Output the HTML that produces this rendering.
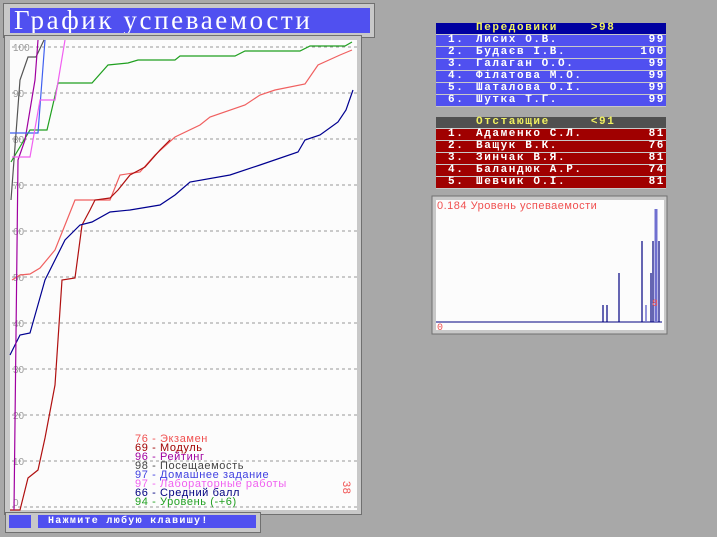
<!DOCTYPE html>
<html><head><meta charset="utf-8"><style>
body{margin:0;width:717px;height:537px;background:#a8a8a8;overflow:hidden;position:relative;font-family:"Liberation Mono","DejaVu Sans Mono",monospace}
.a{position:absolute}
.row{position:relative;height:11px;line-height:11px;font-size:11px;font-weight:bold;color:#fff;white-space:pre;border-bottom:1px solid #c8c8c8;letter-spacing:1.6px}
.row .n{position:absolute;left:12px}.row .m{position:absolute;left:40px}.row .s{position:absolute;right:1px}
.hd{height:11px;line-height:11px;font-size:11px;font-weight:bold;color:#f0f060;white-space:pre;letter-spacing:1.6px;padding-left:40px;border-bottom:1px solid #c8c8c8}
</style></head><body>
<div class="a" style="left:3px;top:3px;width:370px;height:33px;background:#c8c8c8;border:1px solid #707070"></div>
<div class="a" style="left:10px;top:8px;width:360px;height:25px;background:#5050f0;color:#fff;font-family:'Liberation Serif',serif;font-size:27px;line-height:25px;padding-left:4px;letter-spacing:2.6px;overflow:hidden;white-space:nowrap;box-sizing:border-box">График успеваемости</div>
<div class="a" style="left:4px;top:35px;width:356px;height:478px;background:#c8c8c8;border:1px solid #707070"></div>
<svg class="a" style="left:0;top:0" width="717" height="537">
<rect x="10" y="40" width="347" height="470" fill="#fcfcfc"/>
<g stroke="#999" stroke-dasharray="3,3" stroke-width="1">
<line x1="12" x2="357" y1="47" y2="47"/><line x1="12" x2="357" y1="93" y2="93"/><line x1="12" x2="357" y1="139" y2="139"/><line x1="12" x2="357" y1="185" y2="185"/><line x1="12" x2="357" y1="231" y2="231"/><line x1="12" x2="357" y1="277" y2="277"/><line x1="12" x2="357" y1="323" y2="323"/><line x1="12" x2="357" y1="369" y2="369"/><line x1="12" x2="357" y1="415" y2="415"/><line x1="12" x2="357" y1="461" y2="461"/><line x1="12" x2="357" y1="507" y2="507"/></g>
<g font-size="10" fill="#999" font-family="Liberation Sans,sans-serif">
<text x="13" y="51">100</text><text x="13" y="97">90</text><text x="13" y="143">80</text><text x="13" y="189">70</text><text x="13" y="235">60</text><text x="13" y="281">50</text><text x="13" y="327">40</text><text x="13" y="373">30</text><text x="13" y="419">20</text><text x="13" y="465">10</text><text x="13" y="506">0</text></g>
<g fill="none" stroke-width="1.2">
<polyline stroke="#20a020" points="11,162 30,130 47,130 58,83 92,83 108,65 128,63 138,60 175,60 180,56 235,56 245,51 300,51 310,46 345,46 352,42"/>
<polyline stroke="#f06060" points="12,280 20,275 30,274 40,268 55,250 65,225 75,200 110,200 120,175 140,172 155,155 175,137 200,125 210,117 245,105 260,95 275,90 305,84 318,65 340,55 352,50"/>
<polyline stroke="#b01010" points="10,510 20,510 28,478 38,470 45,438 55,385 62,280 75,278 82,225 90,210 95,200 110,198 118,190 130,175 145,167 160,150 170,140"/>
<polyline stroke="#000090" points="10,355 20,335 30,333 45,280 65,240 80,225 92,222 110,212 130,210 160,205 175,195 190,182 230,175 260,165 298,152 305,140 320,135 338,122 346,110 353,90"/>
<polyline stroke="#555" points="11,200 20,80 28,57 36,57 44,40"/>
<polyline stroke="#a000a0" points="14,510 18,160 25,140 35,80 38,40"/>
<polyline stroke="#4060f0" points="10,133 38,133 45,40"/>
<polyline stroke="#f060f0" points="12,157 30,157 40,100 55,100 58,82 65,40"/>
</g>
<g font-size="11" font-family="Liberation Sans,sans-serif" letter-spacing="0.6">
<text x="135" y="442" fill="#f05050">76 - Экзамен</text>
<text x="135" y="451" fill="#a00000">69 - Модуль</text>
<text x="135" y="460" fill="#a000a0">96 - Рейтинг</text>
<text x="135" y="469" fill="#444">98 - Посещаемость</text>
<text x="135" y="478" fill="#4040e0">97 - Домашнее задание</text>
<text x="135" y="487" fill="#f060f0">97 - Лабораторные работы</text>
<text x="135" y="496" fill="#000080">66 - Средний балл</text>
<text x="135" y="505" fill="#20a020">94 - Уровень (-+6)</text>
<text x="0" y="0" fill="#f05050" transform="translate(343,481) rotate(90)">38</text></g>
<rect x="432" y="196" width="235" height="138" fill="#c8c8c8" stroke="#707070"/>
<rect x="436" y="200" width="228" height="130" fill="#fcfcfc"/>
<line x1="436" x2="662" y1="322" y2="322" stroke="#000080"/>
<g stroke="#000080" stroke-width="1.2"><line x1="603" x2="603" y1="305" y2="322"/><line x1="607" x2="607" y1="305" y2="322"/><line x1="619" x2="619" y1="273" y2="322"/><line x1="642" x2="642" y1="241" y2="322"/><line x1="651" x2="651" y1="273" y2="322"/><line x1="653" x2="653" y1="241" y2="322"/><line x1="659" x2="659" y1="241" y2="322"/></g>
<line x1="646" x2="646" y1="305" y2="322" stroke="#7070d0" stroke-width="1.5"/>
<rect x="654.5" y="209" width="3" height="113" fill="#7070d0"/>
<text x="652" y="306" font-size="10" fill="#f05050">8</text>
<text x="437" y="209" font-size="11" fill="#f05050" font-family="Liberation Sans,sans-serif" letter-spacing="0.5">0.184    Уровень успеваемости</text>
<text x="437" y="330" font-size="10" fill="#f05050">0</text>
</svg>
<div class="a" style="left:436px;top:23px;width:230px;">
<div class="hd" style="background:#0000a0">Передовики    &gt;98</div>
<div style="background:#5050f0">
<div class="row"><span class="n">1.</span><span class="m">Лисих О.В.</span><span class="s">99</span></div>
<div class="row"><span class="n">2.</span><span class="m">Будаєв І.В.</span><span class="s">100</span></div>
<div class="row"><span class="n">3.</span><span class="m">Галаган О.О.</span><span class="s">99</span></div>
<div class="row"><span class="n">4.</span><span class="m">Філатова М.О.</span><span class="s">99</span></div>
<div class="row"><span class="n">5.</span><span class="m">Шаталова О.І.</span><span class="s">99</span></div>
<div class="row"><span class="n">6.</span><span class="m">Шутка Т.Г.</span><span class="s">99</span></div></div>
<div style="height:10px"></div>
<div class="hd" style="background:#505050">Отстающие     &lt;91</div>
<div style="background:#a00000">
<div class="row"><span class="n">1.</span><span class="m">Адаменко С.Л.</span><span class="s">81</span></div>
<div class="row"><span class="n">2.</span><span class="m">Ващук В.К.</span><span class="s">76</span></div>
<div class="row"><span class="n">3.</span><span class="m">Зинчак В.Я.</span><span class="s">81</span></div>
<div class="row"><span class="n">4.</span><span class="m">Баландюк А.Р.</span><span class="s">74</span></div>
<div class="row"><span class="n">5.</span><span class="m">Шевчик О.І.</span><span class="s">81</span></div></div>
</div>
<div class="a" style="left:5px;top:512px;width:254px;height:19px;background:#c8c8c8;border:1px solid #707070"></div>
<div class="a" style="left:9px;top:515px;width:22px;height:13px;background:#5050f0"></div>
<div class="a" style="left:38px;top:515px;width:218px;height:13px;background:#5050f0;color:#fff;font-size:10px;font-weight:bold;line-height:13px;padding-left:10px;box-sizing:border-box;letter-spacing:1.3px;white-space:nowrap">Нажмите любую клавишу!</div>
</body></html>
